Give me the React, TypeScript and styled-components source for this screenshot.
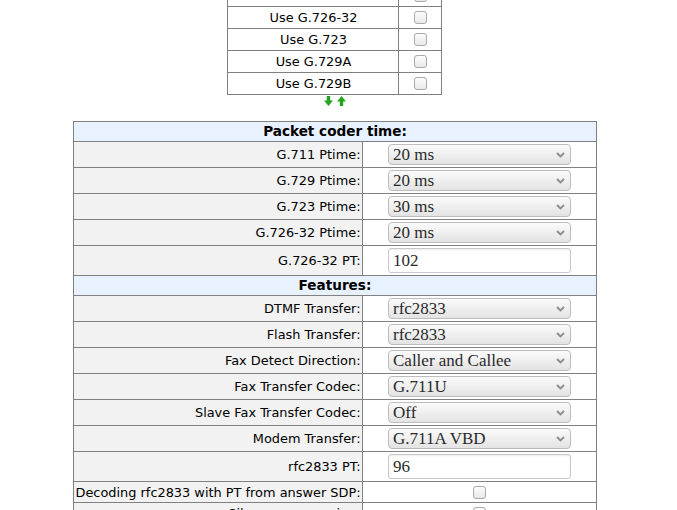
import React from 'react';
import styled, { createGlobalStyle } from 'styled-components';

const Global = createGlobalStyle`
  html, body { margin: 0; padding: 0; background: #fff; }
  body {
    font-family: "DejaVu Sans", Verdana, sans-serif;
    font-size: 12.9px;
    color: #000;
  }
`;

const Page = styled.div`
  width: 669px;
  margin-top: -16px;
  display: flex;
  flex-direction: column;
  align-items: center;
`;

const Table = styled.table<{ $w: number }>`
  border-collapse: collapse;
  table-layout: fixed;
  width: ${p => p.$w}px;
`;

const Cell = styled.td<{ $h: number; $kind: 'label' | 'value' | 'codec' | 'head' }>`
  border: 1px solid #808080;
  height: ${p => p.$h}px;
  padding: 0 1px 0 2px;
  vertical-align: middle;
  line-height: 15px;
  white-space: nowrap;
  overflow: hidden;
  text-align: ${p => (p.$kind === 'label' ? 'right' : 'center')};
  background: ${p =>
    p.$kind === 'label' ? '#f2f2f2' : p.$kind === 'head' ? '#e8f1fe' : '#fff'};
  font-weight: ${p => (p.$kind === 'head' ? 'bold' : 'normal')};
  font-size: ${p => (p.$kind === 'head' ? '13.6px' : 'inherit')};
`;

const Arrows = styled.div`
  display: flex;
  gap: 4px;
  height: 10px;
  margin: 1px 0 15px 0;
`;

const Check = styled.input.attrs({ type: 'checkbox' })`
  appearance: none;
  display: block;
  width: 13px;
  height: 13px;
  margin: 0 auto;
  border: 1px solid #a9a9a9;
  border-radius: 3px;
  background: linear-gradient(#fcfcfc, #e9e9e9);
`;

const SelectWrap = styled.span`
  position: relative;
  display: inline-block;
  width: 183px;
  height: 21px;
  vertical-align: middle;
`;

const Select = styled.select`
  appearance: none;
  width: 100%;
  height: 100%;
  margin: 0;
  padding: 0 0 0 4px;
  border: 1px solid #bdbdbd;
  border-radius: 4px;
  background: linear-gradient(#fbfbfb, #e3e3e3);
  font-family: "Liberation Serif", "Times New Roman", serif;
  font-size: 17px;
  line-height: 19px;
  color: #2a2a2a;
  outline: none;
`;

const Chevron = styled.svg`
  position: absolute;
  right: 6px;
  top: 8px;
  pointer-events: none;
`;

const TextInput = styled.input`
  box-sizing: border-box;
  width: 183px;
  height: 25px;
  margin: 0;
  padding: 0 0 0 4px;
  vertical-align: middle;
  border: 1px solid #c8c8c8;
  border-radius: 3px;
  box-shadow: inset 0 1px 2px rgba(0, 0, 0, 0.08);
  background: #fff;
  font-family: "Liberation Serif", "Times New Roman", serif;
  font-size: 17px;
  color: #2a2a2a;
  outline: none;
`;

const codecs = ['Use G.711A', 'Use G.726-32', 'Use G.723', 'Use G.729A', 'Use G.729B'];

type Row =
  | { t: 'head'; label: string }
  | { t: 'select'; label: string; value: string }
  | { t: 'input'; label: string; value: string }
  | { t: 'check'; label: string };

const rows: Row[] = [
  { t: 'head', label: 'Packet coder time:' },
  { t: 'select', label: 'G.711 Ptime:', value: '20 ms' },
  { t: 'select', label: 'G.729 Ptime:', value: '20 ms' },
  { t: 'select', label: 'G.723 Ptime:', value: '30 ms' },
  { t: 'select', label: 'G.726-32 Ptime:', value: '20 ms' },
  { t: 'input', label: 'G.726-32 PT:', value: '102' },
  { t: 'head', label: 'Features:' },
  { t: 'select', label: 'DTMF Transfer:', value: 'rfc2833' },
  { t: 'select', label: 'Flash Transfer:', value: 'rfc2833' },
  { t: 'select', label: 'Fax Detect Direction:', value: 'Caller and Callee' },
  { t: 'select', label: 'Fax Transfer Codec:', value: 'G.711U' },
  { t: 'select', label: 'Slave Fax Transfer Codec:', value: 'Off' },
  { t: 'select', label: 'Modem Transfer:', value: 'G.711A VBD' },
  { t: 'input', label: 'rfc2833 PT:', value: '96' },
  { t: 'check', label: 'Decoding rfc2833 with PT from answer SDP:' },
  { t: 'check', label: 'Silence suppression:' },
  { t: 'check', label: 'Echo cancellation:' },
];

const heights: Record<Row['t'], number> = { head: 19, select: 25, input: 29, check: 20 };

const DownArrow = () => (
  <svg width="9" height="10" viewBox="0 0 9 10">
    <rect x="2.8" y="0" width="3.4" height="5" fill="#22a322" />
    <polygon points="0,4.5 9,4.5 4.5,10" fill="#22a322" />
  </svg>
);

const UpArrow = () => (
  <svg width="9" height="10" viewBox="0 0 9 10">
    <polygon points="0,5.5 9,5.5 4.5,0" fill="#22a322" />
    <rect x="2.8" y="5" width="3.4" height="5" fill="#22a322" />
  </svg>
);

const Dropdown = ({ value }: { value: string }) => (
  <SelectWrap>
    <Select defaultValue={value}>
      <option>{value}</option>
    </Select>
    <Chevron width="9" height="6" viewBox="0 0 9 6">
      <polyline points="1,1 4.5,4.5 8,1" fill="none" stroke="#8c8c8c" strokeWidth="1.8" />
    </Chevron>
  </SelectWrap>
);

export default function App() {
  return (
    <>
      <Global />
      <Page>
        <Table $w={214}>
          <colgroup>
            <col style={{ width: 171 }} />
            <col style={{ width: 43 }} />
          </colgroup>
          <tbody>
            {codecs.map(c => (
              <tr key={c}>
                <Cell $h={21} $kind="codec">{c}</Cell>
                <Cell $h={21} $kind="value"><Check /></Cell>
              </tr>
            ))}
          </tbody>
        </Table>
        <Arrows>
          <DownArrow />
          <UpArrow />
        </Arrows>
        <Table $w={523}>
          <colgroup>
            <col style={{ width: 289 }} />
            <col style={{ width: 234 }} />
          </colgroup>
          <tbody>
            {rows.map((r, i) => {
              const h = heights[r.t];
              if (r.t === 'head') {
                return (
                  <tr key={i}>
                    <Cell $h={h} $kind="head" colSpan={2}>{r.label}</Cell>
                  </tr>
                );
              }
              return (
                <tr key={i}>
                  <Cell $h={h} $kind="label">{r.label}</Cell>
                  <Cell $h={h} $kind="value">
                    {r.t === 'select' && <Dropdown value={r.value} />}
                    {r.t === 'input' && <TextInput defaultValue={r.value} />}
                    {r.t === 'check' && <Check />}
                  </Cell>
                </tr>
              );
            })}
          </tbody>
        </Table>
      </Page>
    </>
  );
}
